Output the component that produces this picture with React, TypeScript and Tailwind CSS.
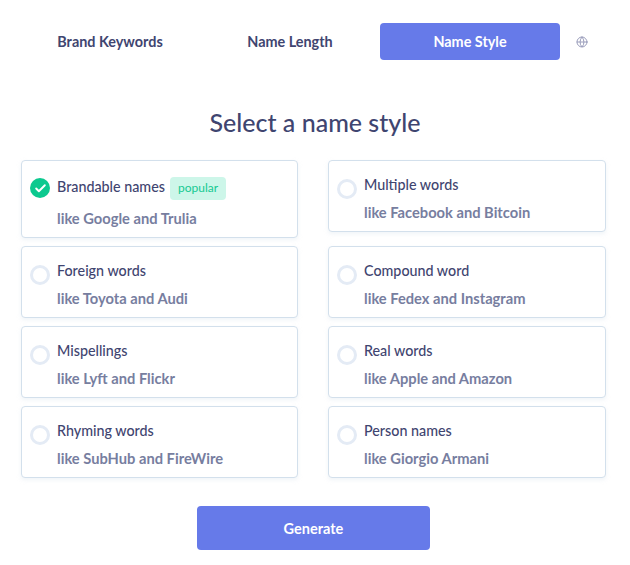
import React from 'react';
import { Check, Globe } from 'lucide-react';

const styles = [
    { name: 'Brandable names', hint: 'like Google and Trulia', selected: true },
    { name: 'Multiple words', hint: 'like Facebook and Bitcoin' },
    { name: 'Foreign words', hint: 'like Toyota and Audi' },
    { name: 'Compound word', hint: 'like Fedex and Instagram' },
    { name: 'Mispellings', hint: 'like Lyft and Flickr' },
    { name: 'Real words', hint: 'like Apple and Amazon' },
    { name: 'Rhyming words', hint: 'like SubHub and FireWire' },
    { name: 'Person names', hint: 'like Giorgio Armani' },
];

const App: React.FC = () => {
    return (
        <div className="w-[630px] h-[565px] bg-white overflow-hidden font-['Lato',sans-serif]">
            <div className="flex items-center pl-5 pt-[23px]">
                <div className="w-[180px] h-[37px] flex items-center justify-center text-[14.4px] font-bold text-[#3f4570]">Brand Keywords</div>
                <div className="w-[180px] h-[37px] flex items-center justify-center text-[14.4px] font-bold text-[#3f4570]">Name Length</div>
                <div className="w-[180px] h-[37px] flex items-center justify-center text-[14.4px] font-bold text-white bg-[#667ae9] rounded">Name Style</div>
                <Globe size={12} className="ml-[16px] text-[#9a9dbb]" />
            </div>

            <h1 className="mt-[43px] text-center text-[25px] leading-[38px] font-medium text-[#3f4570]">Select a name style</h1>

            <div className="grid grid-cols-[277px_278px] gap-x-[30px] gap-y-2 items-start mt-[19px] ml-[21px]">
                {styles.map((s) => (
                    <div
                        key={s.name}
                        className={`flex items-start gap-[7px] pl-2 bg-white border border-[#d3e0ec] rounded shadow-[0_2px_4px_rgba(211,224,236,0.35)] ${s.selected ? 'h-[78px]' : 'h-[72px]'}`}
                    >
                        {s.selected ? (
                            <span className="mt-[17px] w-5 h-5 rounded-full bg-[#0cc98f] flex items-center justify-center shrink-0">
                                <Check size={13} strokeWidth={3.5} className="text-white" />
                            </span>
                        ) : (
                            <span className="mt-[18px] w-5 h-5 rounded-full border-[3px] border-[#e4ebf5] shrink-0" />
                        )}
                        <div className="flex flex-col pt-[14px]">
                            <div className={`flex items-center gap-[5px] ${s.selected ? 'h-[24px]' : 'h-5'}`}>
                                <span className="text-[14.3px] font-medium text-[#3f4570]">{s.name}</span>
                                {s.selected && (
                                    <span className="mt-[2px] h-[23px] px-2 flex items-center rounded bg-[#cdf6e9] text-[12px] text-[#14c992]">popular</span>
                                )}
                            </div>
                            <div className={`text-[14.7px] leading-5 font-bold text-[#777e9f] ${s.selected ? 'mt-[9px]' : 'mt-[7px]'}`}>{s.hint}</div>
                        </div>
                    </div>
                ))}
            </div>

            <div className="flex justify-center mt-[28px] pr-[3px]">
                <button className="w-[233px] h-[44px] pt-[2px] bg-[#667ae9] rounded text-white text-[14.5px] font-bold">Generate</button>
            </div>
        </div>
    );
};

export default App;
